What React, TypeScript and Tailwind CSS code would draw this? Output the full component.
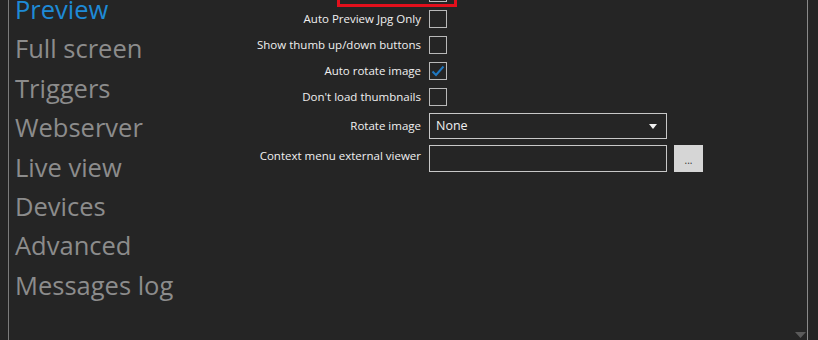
import React from "react";

const navItems = [
  "Preview",
  "Full screen",
  "Triggers",
  "Webserver",
  "Live view",
  "Devices",
  "Advanced",
  "Messages log",
];

const checkRows = [
  { label: "Enable preview", checked: false },
  { label: "Auto Preview Jpg Only", checked: false },
  { label: "Show thumb up/down buttons", checked: false },
  { label: "Auto rotate image", checked: true },
  { label: "Don't load thumbnails", checked: false },
];

function CheckBox({ checked }: { checked: boolean }) {
  return (
    <div className="flex h-[18px] w-[18px] items-center justify-center border border-[#b9b9b9]">
      {checked && (
        <svg width="14" height="12" viewBox="0 0 14 12">
          <path d="M1.5 6.5 L5 10 L12.5 1.5" fill="none" stroke="#1f78c1" strokeWidth="2" />
        </svg>
      )}
    </div>
  );
}

export default function App() {
  return (
    <div
      className="relative flex h-[340px] w-[818px] overflow-hidden bg-[#252525] text-[#f0f0f0]"
      style={{ fontFamily: '"Open Sans", "Noto Sans", sans-serif' }}
    >
      <div className="ml-[8px] flex w-[192px] flex-col border-l border-[#7c7c7c] pl-[6px]">
        <div className="-mt-[10px] flex flex-col">
          {navItems.map((item, i) => (
            <div
              key={item}
              className={`h-[39.4px] text-[25.5px] leading-[39.4px] ${
                i === 0 ? "text-[#1e8ad6]" : "text-[#8c8c8c]"
              }`}
            >
              {item}
            </div>
          ))}
        </div>
      </div>

      <div className="flex flex-1 flex-col border-r border-[#8a8a8a]">
        <div className="-mt-[20px] grid grid-cols-[221px_1fr] gap-x-[8px] text-[11.5px]">
          {checkRows.map((row) => (
            <React.Fragment key={row.label}>
              <div className="flex h-[26px] items-center justify-end">{row.label}</div>
              <div className="flex h-[26px] items-center">
                <CheckBox checked={row.checked} />
              </div>
            </React.Fragment>
          ))}

          <div className="flex h-[32px] items-center justify-end">Rotate image</div>
          <div className="flex h-[32px] items-center">
            <div className="flex h-[26px] w-[238px] items-center justify-between border border-[#c8c8c8] pl-[6px] pr-[9px] text-[12.5px]">
              <span>None</span>
              <svg width="8" height="5" viewBox="0 0 8 5">
                <path d="M0 0 H8 L4 5 Z" fill="#f0f0f0" />
              </svg>
            </div>
          </div>

          <div className="flex h-[33px] items-center justify-end pb-[6px]">Context menu external viewer</div>
          <div className="flex h-[33px] items-center gap-[7px]">
            <div className="h-[27px] w-[238px] border border-[#c8c8c8]" />
            <div className="flex h-[27px] w-[29px] items-center justify-center bg-[#d6d6d6] pt-[3px] text-[10px] leading-none text-[#333]">
              ...
            </div>
          </div>
        </div>

        <div className="absolute left-[337px] top-[-14px] h-[21px] w-[120px] border-[3px] border-[#e3101c]" />
      </div>

      <div className="w-[10px]" />

      <svg className="absolute bottom-[2px] left-[795px]" width="11" height="6" viewBox="0 0 11 6">
        <path d="M0 0 H11 L5.5 6 Z" fill="#5a5a5a" />
      </svg>
    </div>
  );
}
